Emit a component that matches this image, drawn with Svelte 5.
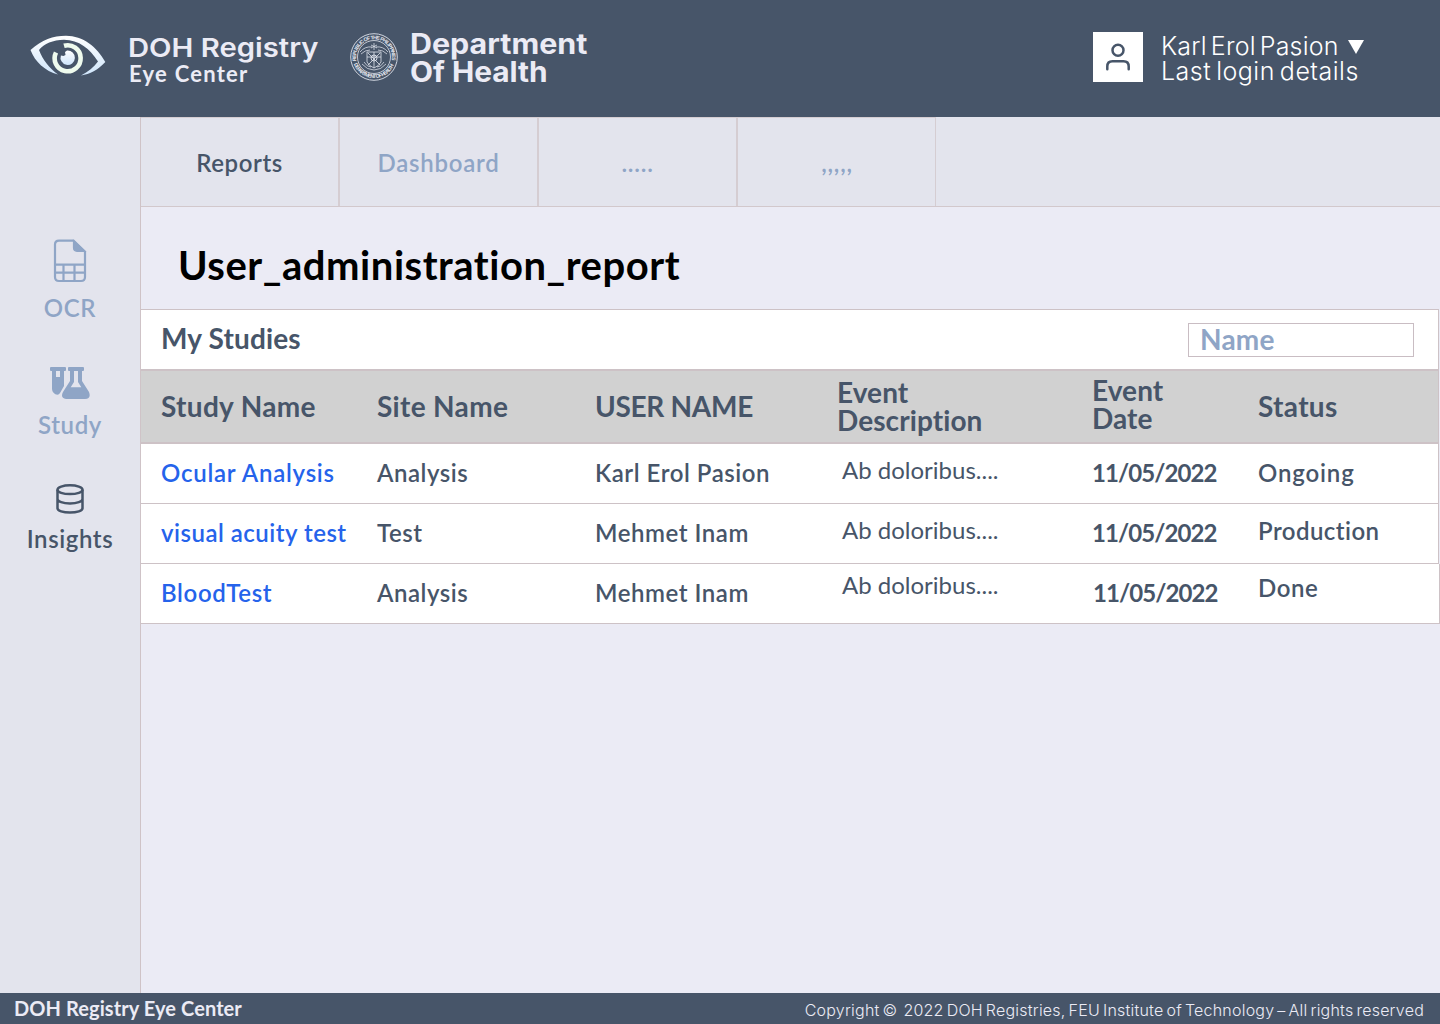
<script>
  const tabs = [
    { label: 'Reports', active: true },
    { label: 'Dashboard' },
    { label: '.....' },
    { label: ',,,,,' },
  ];
  const rows = [
    { study: 'Ocular Analysis', site: 'Analysis', user: 'Karl Erol Pasion', status: 'Ongoing', kind: 'r1' },
    { study: 'visual acuity test', site: 'Test', user: 'Mehmet Inam', status: 'Production', kind: 'r2' },
    { study: 'BloodTest', site: 'Analysis', user: 'Mehmet Inam', status: 'Done', kind: 'r3' },
  ];
</script>

<div class="page">
  <header class="top">
    <svg class="eye" width="76" height="42" viewBox="0 0 76 42">
      <defs>
        <linearGradient id="lid" x1="0" y1="0" x2="0" y2="1"><stop offset="0" stop-color="#fff" /><stop offset="1" stop-color="#cfe5fb" /></linearGradient>
      </defs>
      <path d="M.5 15C12 5 23 .8 36 .8C53 .8 67 12 75.300 27C68 35 60 39 51 40.500C58 37 64 32 68 26.500C60 14 49 4.800 34 4.800C23 4.800 14 9 9 15C13 25 19 33 28 39.500C15 36 5 27 .5 15Z" fill="url(#lid)" />
      <path d="M34 10.800A13 13 0 1 1 26 17.500" fill="none" stroke="#effbee" stroke-width="4.600" />
      <path d="M37 15.600A7.200 7.200 0 1 1 30.900 20.400L33.500 21L35.500 20L35 17Z" fill="url(#lid)" />
    </svg>
    <div class="brand">
      <div class="brand-name">DOH Registry</div>
      <div class="brand-sub">Eye Center</div>
    </div>
    <svg class="seal" width="48" height="48" viewBox="0 0 48 48" fill="none" stroke="#dfe3ec">
      <defs>
        <path id="arcTop" d="M6.400 28a18 18 0 1 1 35.200 0" />
        <path id="arcBottom" d="M3.500 30a21.500 21.500 0 0 0 41 0" />
      </defs>
      <circle cx="24" cy="24" r="23.300" stroke-width=".9" />
      <circle cx="24" cy="24" r="16.500" stroke-width=".8" />
      <g class="seal-text" fill="#e4e7ef" stroke="none">
        <text><textPath href="#arcTop" textLength="63">REPUBLIC OF THE PHILIPPINES</textPath></text>
        <text><textPath href="#arcBottom" startOffset="1" textLength="51">DEPARTMENT OF HEALTH</textPath></text>
      </g>
      <path d="M17 19h14v10q-2 4-7 6q-5-2-7-6zM17 24h14M24 19v16M18 20l12 12M30 20L18 32" stroke-width=".8" />
      <circle cx="24" cy="25" r="3" stroke-width=".9" />
      <path d="M10 19q5-6 12-5M38 19q-5-6-12-5M11 21q4-4 9-4M37 21q-4-4-9-4M24 10v7M21 12l6 3M27 12l-6 3M12 31q5 6 12 6t12-6M14 29q3 5 7 5M34 29q-3 5-7 5" stroke-width="1" opacity=".75" />
    </svg>
    <div class="dept">
      <div class="dept-line">Department</div>
      <div class="dept-line second">Of Health</div>
    </div>
    <div class="user">
      <div class="avatar">
        <svg width="50" height="50" viewBox="0 0 50 50" fill="none" stroke="#475569" stroke-width="2.500" stroke-linecap="round">
          <circle cx="25" cy="18.300" r="5.500" />
          <path d="M14.300 37.300V34.500Q14.300 29.300 19.500 29.300H30.500Q35.700 29.300 35.700 34.500V37.300" />
        </svg>
      </div>
      <div class="who">
        <div class="who-name"><span>Karl Erol Pasion</span><svg width="16" height="15" viewBox="0 0 16 15"><path d="M0 1H16L8 15Z" fill="#fff" /></svg></div>
        <div class="who-login">Last login details</div>
      </div>
    </div>
  </header>

  <div class="middle">
    <nav class="side">
      <div class="item ocr">
        <svg width="34" height="44" viewBox="0 0 34 44" fill="none" stroke="#8fa5c6" stroke-width="2.200">
          <path d="M20.500 1.600H6Q2 1.600 2 5.600V38Q2 42 6 42H28Q32 42 32 38V12.800Z" />
          <path d="M20.500 1.600V8.800Q20.500 12.300 24 12.300H32Z" fill="#8fa5c6" stroke-width="1.200" />
          <path d="M2 25.700H32M2 33.700H32M10.500 25.700V42M21.500 25.700V42" />
        </svg>
        <span>OCR</span>
      </div>
      <div class="item study">
        <svg width="40" height="32" viewBox="0 0 40 32" fill="#8fa5c6" fill-rule="evenodd">
          <path d="M1 0H15Q16 0 16 1V3Q16 4 15 4H14V19L10 26Q9 27.800 7.500 27.800C4.500 27.500 2 25 2 21.500V4H1Q0 4 0 3V1Q0 0 1 0ZM6 4V10H10V4Z" />
          <path d="M19 0H33Q34 0 34 1V3Q34 4 33 4H32V14L39 25Q41.500 32 35 32H16Q10 31 13 25L20 14V4H19Q18 4 18 3V1Q18 0 19 0ZM24 4V15L20.700 20.300H31.300L28 15V4Z" />
        </svg>
        <span>Study</span>
      </div>
      <div class="item insights">
        <svg width="28" height="30" viewBox="0 0 28 30" fill="none" stroke="#475569" stroke-width="2.500">
          <ellipse cx="14" cy="5.700" rx="12.500" ry="4.400" />
          <path d="M1.500 5.700V24.300C1.500 26.800 7 28.600 14 28.600S26.500 26.800 26.500 24.300V5.700M1.500 15C1.500 17.500 7 19.400 14 19.400S26.500 17.500 26.500 15" />
        </svg>
        <span>Insights</span>
      </div>
    </nav>

    <main>
      <div class="tabs">
        {#each tabs as tab}
          <div class="tab" class:active={tab.active}>{tab.label}</div>
        {/each}
      </div>
      <h1>User_administration_report</h1>
      <section class="table">
        <div class="caption">
          <h2>My Studies</h2>
          <div class="search">Name</div>
        </div>
        <div class="row head">
          <div>Study Name</div>
          <div>Site Name</div>
          <div class="up caps">USER NAME</div>
          <div class="two">Event<br />Description</div>
          <div class="two date">Event<br />Date</div>
          <div class="up">Status</div>
        </div>
        {#each rows as row}
          <div class="row {row.kind}">
            <div class="link">{row.study}</div>
            <div>{row.site}</div>
            <div>{row.user}</div>
            <div class="desc">Ab doloribus....</div>
            <div class="day">11/05/2022</div>
            <div class="status">{row.status}</div>
          </div>
        {/each}
      </section>
    </main>
  </div>

  <footer>
    <div class="foot-name">DOH Registry Eye Center</div>
    <div class="foot-copy">Copyright ©&nbsp; 2022 DOH Registries, FEU Institute of Technology – All rights reserved</div>
  </footer>
</div>

<style>
  .page { width: 1440px; height: 1024px; display: flex; flex-direction: column; overflow: hidden; background: #ebebf5; color: #475569; font-family: Lato, "Noto Sans", sans-serif; font-weight: 600; font-variant-ligatures: none; white-space: nowrap; }
  .page * { box-sizing: border-box; }
  .top { height: 117px; flex: none; background: #475569; display: flex; align-items: flex-start; color: #ebebf5; }
  .eye { margin: 35px 0 0 30px; }
  .brand { width: 243px; padding: 34px 0 0 22px; }
  .brand-name { font: 600 26px/28px Inter, sans-serif; transform: scaleX(1.125); transform-origin: left; }
  .brand-sub { padding-left: 1px; font-size: 22px; line-height: 23px; font-weight: 700; letter-spacing: 1.25px; }
  .seal { margin: 33px 0 0 1px; }
  .seal-text { font: 700 5.2px "Liberation Sans", sans-serif; }
  .dept { padding: 30px 0 0 12px; font: 700 28px/28px Inter, sans-serif; }
  .dept-line { transform: scaleX(1.087); transform-origin: left; }
  .dept-line.second { transform: scaleX(1.065); }
  .user { margin-left: auto; width: 347px; padding-top: 32px; display: flex; color: #fff; font: 300 25px/25px Inter, sans-serif; }
  .avatar { width: 50px; height: 50px; background: #fff; }
  .who { margin-left: 18px; padding-top: 2px; }
  .who-name { display: flex; align-items: center; gap: 9px; letter-spacing: .2px; word-spacing: -3.2px; }
  .who-login { letter-spacing: .5px; word-spacing: -2.6px; }

  .middle { flex: 1; display: flex; min-height: 0; }
  .side { width: 141px; background: #e3e4ed; border-right: 1px solid #cfc3c7; display: flex; flex-direction: column; align-items: center; padding-top: 122px; }
  .item { display: flex; flex-direction: column; align-items: center; color: #8fa5c6; font-size: 24px; line-height: 30px; letter-spacing: .6px; }
  .ocr { height: 128px; gap: 10px; }
  .study { height: 117px; gap: 11px; }
  .insights { gap: 10px; color: #475569; }
  main { flex: 1; min-width: 0; }
  .tabs { height: 90px; display: flex; background: #e3e4ed; border-bottom: 1px solid #d2c8cc; }
  .tab { width: 199px; padding-top: 2px; border-top: 1px solid #d5cdd2; border-right: 2px solid #d5cdd2; display: flex; align-items: center; justify-content: center; font-size: 24px; line-height: 30px; letter-spacing: .75px; color: #8fa5c6; }
  .tab:last-child { width: 198px; padding-left: 1px; border-right-width: 1px; }
  .tab.active { color: #475569; letter-spacing: .6px; }
  h1 { margin: 0; height: 102px; padding: 34px 0 0 37px; font-size: 40px; line-height: 48px; font-weight: 700; letter-spacing: .53px; color: #000; }
  h2 { margin: 0 0 3px; font-size: 28px; line-height: 34px; font-weight: 700; letter-spacing: .15px; }
  .table { width: 1299px; }
  .caption { width: 1298px; height: 60px; background: #fff; border: solid #cdc2c6; border-width: 1px 1px 0 0; display: flex; align-items: center; justify-content: space-between; padding: 0 24px 0 20px; }
  .search { width: 226px; height: 34px; border: 1px solid #c9bdc3; padding-left: 11px; font-size: 28px; line-height: 30px; font-weight: 700; letter-spacing: .2px; color: #8fa5c6; }
  .row { width: 1298px; height: 60px; background: #fff; border: solid #cdc2c6; border-width: 0 1px 1px 0; display: grid; grid-template-columns: 216px 218px 242px 255px 166px 1fr; padding: 14px 0 0 20px; font-size: 24px; line-height: 30px; letter-spacing: .55px; }
  .row.head { height: 75px; border-width: 2px 1px 2px 0; background: #d1d1d1; font-size: 28px; line-height: 28px; font-weight: 700; letter-spacing: .32px; padding-top: 21px; }
  .head .caps { letter-spacing: -.3px; }
  .head .two { margin-top: -14px; letter-spacing: .08px; }
  .head .date { margin-top: -16px; }
  .row.r3 { width: 1299px; }
  .link { color: #2563eb; }
  .r1 .link { letter-spacing: .75px; }
  .r2 .link { letter-spacing: .5px; }
  .r3 .link { letter-spacing: .65px; }
  .desc { padding-left: 5px; font-weight: 400; margin-top: -3px; letter-spacing: 0; }
  .day { font-weight: 700; letter-spacing: -.92px; }
  .r1 .status { letter-spacing: .85px; }
  .r2 .status { margin-top: -2px; letter-spacing: .45px; }
  .r3 .status { margin-top: -5px; }
  .r3 .desc { margin-top: -8px; }
  .r3 .day { padding-left: 1px; }

  footer { height: 31px; flex: none; background: #475569; color: #ebebf5; display: flex; justify-content: space-between; padding: 0 16px 0 14px; }
  .foot-name { font-size: 20px; line-height: 31px; font-weight: 700; letter-spacing: .08px; }
  .foot-copy { font: 300 16px/34px Inter, sans-serif; letter-spacing: .22px; word-spacing: -1.7px; }
</style>
